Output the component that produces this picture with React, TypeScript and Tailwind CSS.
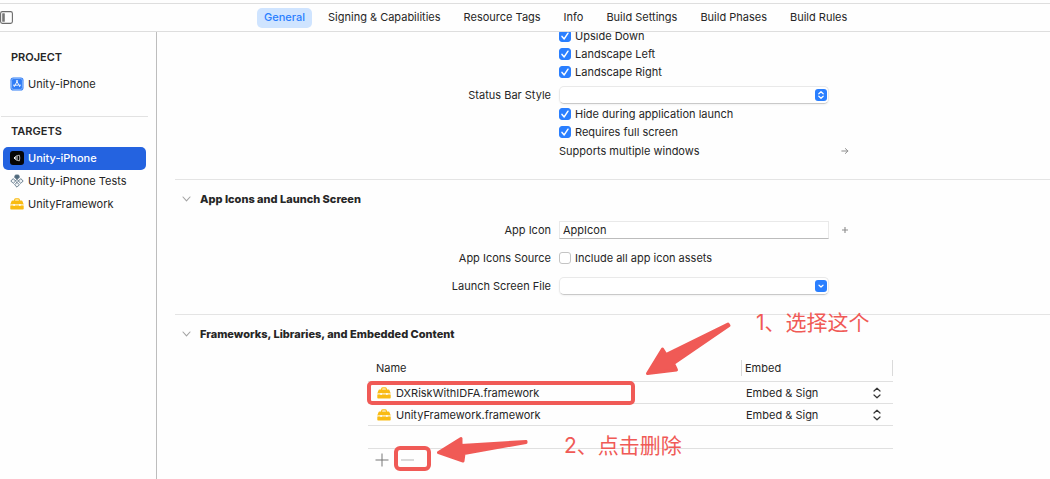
import { useId, type ReactNode } from "react"

const tabs = [
  "General",
  "Signing & Capabilities",
  "Resource Tags",
  "Info",
  "Build Settings",
  "Build Phases",
  "Build Rules",
]

const frameworks = ["DXRiskWithIDFA.framework", "UnityFramework.framework"]

function SidebarToggleIcon() {
  return (
    <svg width="13" height="13" viewBox="0 0 13 13" fill="none">
      <rect x="0.6" y="0.6" width="11.8" height="11.8" rx="1.8" stroke="#6b6b6b" strokeWidth="1.1" />
      <rect x="2.2" y="2.2" width="2.6" height="8.6" rx="0.5" fill="#777" />
    </svg>
  )
}

function ProjectIcon() {
  return (
    <svg width="14" height="14" viewBox="0 0 14 14" fill="none">
      <rect x="0.5" y="0.5" width="13" height="13" rx="2.8" fill="#2f7cf6" />
      <rect x="1.6" y="1.6" width="10.8" height="10.8" rx="1.8" stroke="#a9cbfb" strokeWidth="0.7" />
      <path d="M7.5 3.6 4.3 9.6M6.5 3.6l3.2 6M3.4 8.2h4.2M9.2 8.2h1.4" stroke="#fff" strokeWidth="0.9" strokeLinecap="round" />
    </svg>
  )
}

function UnityIcon() {
  return (
    <svg width="14" height="14" viewBox="0 0 14 14" fill="none">
      <rect width="14" height="14" rx="3" fill="#050505" />
      <path d="M6.8 4.8 4 7l2.800 2.200M4.200 7h2.400" stroke="#fff" strokeWidth="1" />
      <path d="M7.200 4.600 9.400 4.200l.4 2.800-.4 2.800-2.200-.4M7.200 4.600v4.800" stroke="#d6d6d6" strokeWidth="0.8" />
    </svg>
  )
}

function TestsIcon() {
  return (
    <svg width="14" height="14" viewBox="0 0 14 14" fill="none" stroke="#5b7283" strokeWidth="0.9">
      <path d="M5.400 1h3.200L9.400 3.200 7 5.600 4.600 3.200z" fill="#4f6a7d" strokeLinejoin="round" />
      <path d="m3.2 4.6 2.4 2.4-2.4 2.4L.8 7z" fill="#eef2f4" strokeLinejoin="round" />
      <path d="m10.8 4.6 2.4 2.4-2.4 2.4L8.4 7z" fill="#eef2f4" strokeLinejoin="round" />
      <path d="m7 8.4 2.4 2.4L7 13.2l-2.4-2.4z" fill="#eef2f4" strokeLinejoin="round" />
      <path d="m7 5.4 1.6 1.6L7 8.6 5.4 7z" fill="#fff" />
    </svg>
  )
}

function ToolboxIcon() {
  return (
    <svg className="shrink-0" width="14" height="14" viewBox="0 0 14 14" fill="none">
      <path d="M4.6 4V2.9c0-.6.4-1 1-1h2.8c.6 0 1 .4 1 1V4" stroke="#f9bb12" strokeWidth="1.1" />
      <path d="M2.6 3.6h8.8c.6 0 1 .3 1.2.8l1.1 3.2H.3l1.1-3.2c.2-.5.6-.8 1.2-.8z" fill="#f9bb12" />
      <rect x="0.3" y="8.3" width="13.4" height="4.2" rx="0.8" fill="#f9bb12" />
      <path d="M.8 7.9h12.4" stroke="#fff3cf" strokeWidth="0.7" />
      <rect x="3.4" y="6.9" width="1.4" height="2" rx="0.5" fill="#fff" />
      <rect x="9.2" y="6.9" width="1.4" height="2" rx="0.5" fill="#fff" />
    </svg>
  )
}

const targets = [
  { name: "Unity-iPhone", icon: UnityIcon, selected: true },
  { name: "Unity-iPhone Tests", icon: TestsIcon, selected: false },
  { name: "UnityFramework", icon: ToolboxIcon, selected: false },
]

function Checkbox({ label, checked = false }: { label: string; checked?: boolean }) {
  return (
    <label className="flex h-[18px] items-center gap-1 leading-none">
      <span className="relative h-3 w-3">
        <input
          type="checkbox"
          defaultChecked={checked}
          className="peer block h-3 w-3 appearance-none rounded-[3px] border border-[#c4c4c4] bg-white checked:border-[#2a7fff] checked:bg-[#2a7fff]"
        />
        <svg
          className="pointer-events-none absolute inset-0 hidden peer-checked:block"
          width="12"
          height="12"
          viewBox="0 0 12 12"
          fill="none"
        >
          <path d="m3 6.4 2.2 2.5L9 3.2" stroke="#fff" strokeWidth="1.5" strokeLinecap="round" strokeLinejoin="round" />
        </svg>
      </span>
      {label}
    </label>
  )
}

function PopUp({ id, double = false }: { id: string; double?: boolean }) {
  return (
    <div className="relative">
      <select
        id={id}
        className="block h-[18px] w-full appearance-none rounded-[5px] border border-[#e9e9e9] border-b-[#c9c9c9] bg-white px-1 shadow-xs"
      >
        <option></option>
      </select>
      <svg
        className="pointer-events-none absolute top-[3px] right-[2px]"
        width="12"
        height="12"
        viewBox="0 0 12 12"
        fill="none"
      >
        <rect width="12" height="12" rx="3" fill="#2a7fff" />
        <path
          d={double ? "M3.8 4.8 6 2.7l2.2 2.1M3.8 7.2 6 9.3l2.2-2.1" : "M4 5.2l2 1.8 2-1.8"}
          stroke="#fff"
          strokeWidth="1.2"
          strokeLinecap="round"
          strokeLinejoin="round"
        />
      </svg>
    </div>
  )
}

function Row({ label, htmlFor, action, children }: { label?: string; htmlFor?: string; action?: ReactNode; children: ReactNode }) {
  return (
    <div className="grid grid-cols-[376px_270px_16px] items-center gap-x-2">
      {htmlFor ? (
        <label htmlFor={htmlFor} className="text-right">{label}</label>
      ) : (
        <span className="text-right">{label}</span>
      )}
      {children}
      {action}
    </div>
  )
}

function SectionTitle({ children }: { children: ReactNode }) {
  return (
    <h2 className="flex h-9 items-center gap-2 pt-px pl-[6px] font-extrabold">
      <svg width="11" height="12" viewBox="0 0 11 12" fill="none">
        <path d="m2 4 3.5 3.8L9 4" stroke="#a3a3a3" strokeWidth="1.1" strokeLinecap="round" strokeLinejoin="round" />
      </svg>
      {children}
    </h2>
  )
}

export default function App() {
  const id = useId()

  return (
    <div className="flex min-h-screen flex-col bg-[#fefefe] font-['Inter','Noto_Sans_CJK_SC',sans-serif] text-[11px] leading-4 text-[#262626]">
      {/* Editor tabs */}
      <header className="mt-[3px] flex h-[29px] items-center border-y border-[#dedede]">
        <button type="button" aria-label="Toggle sidebar" className="w-[257px] shrink-0">
          <SidebarToggleIcon />
        </button>
        <nav className="flex gap-[9px]">
          {tabs.map((tab) => (
            <button
              key={tab}
              type="button"
              className={
                tab === "General"
                  ? "h-5 rounded-[5px] bg-[#cfe4ff] px-[7px] pb-[2px] font-medium whitespace-nowrap text-[#2a7fff]"
                  : "h-5 px-[7px] pb-[2px] whitespace-nowrap"
              }
            >
              {tab}
            </button>
          ))}
        </nav>
      </header>

      <div className="flex flex-1">
        {/* Project and targets */}
        <aside className="w-[157px] shrink-0 border-r border-[#bdbdbd] pt-[17px]">
          <h2 className="pl-[11px] font-semibold">PROJECT</h2>
          <button type="button" className="mt-[7px] flex h-[23px] items-center gap-1 pl-[10px]">
            <ProjectIcon />
            Unity-iPhone
          </button>
          <hr className="mt-[21px] mr-2 ml-px border-[#e2e2e2]" />
          <h2 className="mt-[6px] mb-2 pl-[11px] font-semibold">TARGETS</h2>
          <ul className="pr-[10px] pl-[3px]">
            {targets.map((target) => (
              <li key={target.name}>
                <button
                  type="button"
                  className={
                    target.selected
                      ? "flex h-[23px] w-full items-center gap-1 rounded-[5px] bg-[#2463e0] pb-px pl-[7px] font-medium text-white"
                      : "flex h-[23px] w-full items-center gap-1 pb-px pl-[7px]"
                  }
                >
                  <target.icon />
                  {target.name}
                </button>
              </li>
            ))}
          </ul>
        </aside>

        <main className="min-w-0 flex-1 overflow-hidden pl-[18px]">
          {/* Deployment info, scrolled under the tabs */}
          <section className="-mt-[5px] pb-[18px]">
            <Row><Checkbox label="Upside Down" checked /></Row>
            <Row><Checkbox label="Landscape Left" checked /></Row>
            <Row><Checkbox label="Landscape Right" checked /></Row>
            <div className="pt-[5px] pb-px">
              <Row label="Status Bar Style" htmlFor={`${id}-status`}>
                <PopUp id={`${id}-status`} double />
              </Row>
            </div>
            <Row><Checkbox label="Hide during application launch" checked /></Row>
            <Row><Checkbox label="Requires full screen" checked /></Row>
            <Row
              action={
                <button type="button" aria-label="Show scene manifest" className="flex h-5 items-center justify-center">
                  <svg width="8" height="8" viewBox="0 0 8 8" fill="none">
                    <path d="M.8 4h6M4.4 1.6 6.9 4 4.4 6.4" stroke="#8c8c8c" strokeWidth="1" strokeLinecap="round" />
                  </svg>
                </button>
              }
            >
              <span>Supports multiple windows</span>
            </Row>
          </section>

          <section className="border-t border-[#e4e4e4] pb-[14px]">
            <SectionTitle>App Icons and Launch Screen</SectionTitle>
            <div className="grid auto-rows-[28px] items-center">
              <Row
                label="App Icon"
                htmlFor={`${id}-icon`}
                action={
                  <button type="button" aria-label="Add app icon" className="flex h-5 items-center justify-center">
                    <svg width="8" height="8" viewBox="0 0 8 8" fill="none">
                      <path d="M4 1v6M1 4h6" stroke="#8c8c8c" strokeWidth="1.1" />
                    </svg>
                  </button>
                }
              >
                <input
                  id={`${id}-icon`}
                  defaultValue="AppIcon"
                  className="h-[18px] w-full border border-[#e9e9e9] border-b-[#bcbcbc] bg-white px-[3px]"
                />
              </Row>
              <Row label="App Icons Source"><Checkbox label="Include all app icon assets" /></Row>
              <Row label="Launch Screen File" htmlFor={`${id}-launch`}>
                <PopUp id={`${id}-launch`} />
              </Row>
            </div>
          </section>

          <section className="border-t border-[#e4e4e4]">
            <SectionTitle>Frameworks, Libraries, and Embedded Content</SectionTitle>
            <div className="relative mt-[9px] ml-[193px] w-[525px]">
              <table className="w-full table-fixed border-collapse text-left">
                <colgroup>
                  <col />
                  <col className="w-[152px]" />
                </colgroup>
                <thead>
                  <tr className="h-[21px] border-b border-[#e0e0e0] align-top">
                    <th className="p-0 pl-2 font-normal">Name</th>
                    <th className="p-0 font-normal">
                      <div className="border-x border-[#dadada] pl-[3px]">Embed</div>
                    </th>
                  </tr>
                </thead>
                <tbody>
                  {frameworks.map((name) => (
                    <tr key={name} className="h-[22px] border-b border-[#e0e0e0]">
                      <td className="p-0 pt-px pl-[9px]">
                        <span className="flex items-center gap-[5px]">
                          <ToolboxIcon />
                          {name}
                        </span>
                      </td>
                      <td className="p-0 pt-px">
                        <div className="relative">
                          <select
                            aria-label={`Embed ${name}`}
                            className="block h-4 w-full appearance-none bg-transparent pl-[5px]"
                          >
                            <option>Embed &amp; Sign</option>
                          </select>
                          <svg
                            className="pointer-events-none absolute top-[2px] right-[11px]"
                            width="10"
                            height="12"
                            viewBox="0 0 10 12"
                            fill="none"
                          >
                            <path
                              d="M2 4 5 1.2 8 4M2 8l3 2.8L8 8"
                              stroke="#333"
                              strokeWidth="1.2"
                              strokeLinecap="round"
                              strokeLinejoin="round"
                            />
                          </svg>
                        </div>
                      </td>
                    </tr>
                  ))}
                </tbody>
              </table>
              <div className="mt-[22px] flex h-6 items-center gap-3 border-t border-[#e0e0e0] pl-[7px]">
                <button type="button" aria-label="Add framework">
                  <svg width="14" height="14" viewBox="0 0 14 14" fill="none">
                    <path d="M7 .5v13M.5 7h13" stroke="#777" strokeWidth="1" />
                  </svg>
                </button>
                <button type="button" aria-label="Remove framework">
                  <svg width="13" height="14" viewBox="0 0 13 14" fill="none">
                    <path d="M0 7h13" stroke="#b5b5b5" strokeWidth="1" />
                  </svg>
                </button>
              </div>

              {/* Step annotations */}
              <div className="pointer-events-none absolute top-[21px] -left-px h-[24px] w-[268px] rounded-[5px] border-4 border-[#f05a56]" />
              <div className="pointer-events-none absolute top-[86px] left-[26px] h-[25px] w-[37px] rounded-[6px] border-4 border-[#f05a56]" />
              <svg
                className="pointer-events-none absolute -top-[40px] left-[276px]"
                width="90"
                height="60"
                viewBox="0 0 90 60"
                fill="#f05a56"
                stroke="#f05a56"
                strokeWidth="3"
                strokeLinejoin="round"
              >
                <path d="M3.5 53.5 18.500 29l3.500 5.500L84 4l1 1.500L29.500 43.500l3 6.500z" />
              </svg>
              <svg
                className="pointer-events-none absolute top-[74px] left-[68px]"
                width="96"
                height="32"
                viewBox="0 0 96 32"
                fill="#f05a56"
                stroke="#f05a56"
                strokeWidth="3"
                strokeLinejoin="round"
              >
                <path d="M2.500 18.500 25 4.500v7L90 7.500v1L28 19.500l-1 7.500z" />
              </svg>
              <p className="pointer-events-none absolute -top-[51px] left-[388px] text-[21px] leading-7 whitespace-nowrap text-[#f05a56]">
                1、选择这个
              </p>
              <p className="pointer-events-none absolute top-[72px] left-[196px] text-[21px] leading-7 whitespace-nowrap text-[#f05a56]">
                2、点击删除
              </p>
            </div>
          </section>
        </main>
      </div>
    </div>
  )
}
